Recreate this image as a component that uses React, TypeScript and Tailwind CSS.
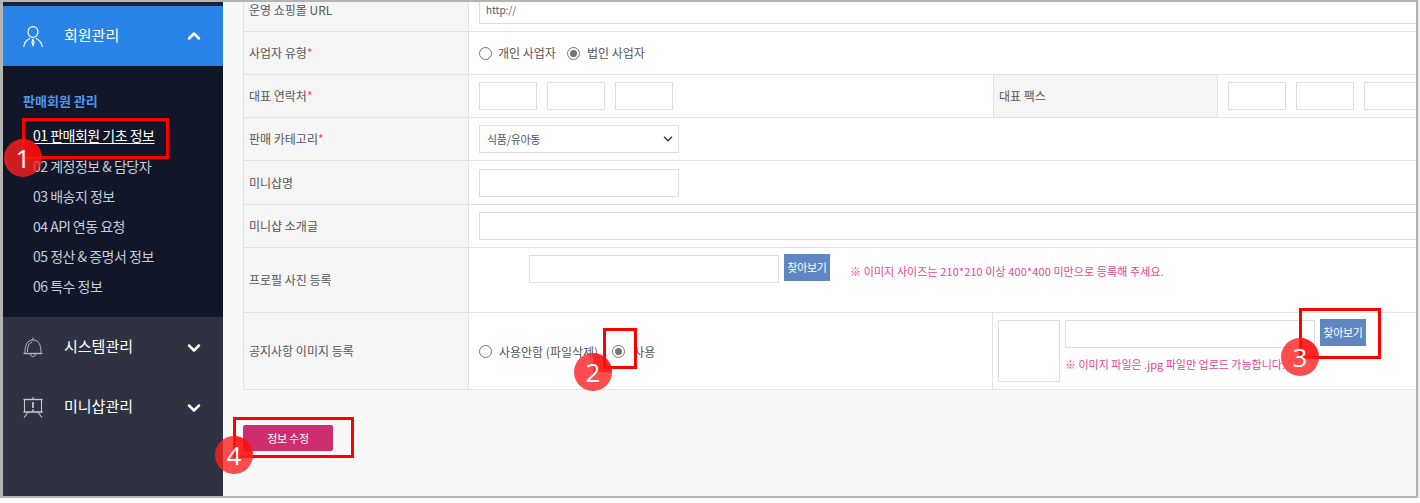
import { ChevronDown, ChevronUp } from "lucide-react"

const subMenus = ["02 계정정보 & 담당자", "03 배송지 정보", "04 API 연동 요청", "05 정산 & 증명서 정보", "06 특수 정보"]

function UserIcon() {
  return (
    <svg width="20" height="21" viewBox="0 0 20 21" fill="none" stroke="#fff" strokeWidth="1.2" className="shrink-0">
      <ellipse cx="10" cy="6" rx="5" ry="5.4" />
      <path d="M0.8 21 C1 16 4 14 7 12.3 M19.2 21 C19 16 16 14 13 12.3 M10 13.5 l-1 2.5 1 4 1-4z" />
    </svg>
  )
}

function BellIcon() {
  return (
    <svg width="20" height="21" viewBox="0 0 20 21" fill="none" stroke="#b4b6bf" strokeWidth="1" className="shrink-0">
      <path d="M10 0.5v2.5M2 16 C2 8 4 3 10 3 C16 3 18 8 18 16" />
      <path d="M4.5 15 C4.5 9 6 6 9 5" />
      <path d="M0.5 16.5h19" strokeWidth="1.4" />
      <path d="M7.5 17c0 3.6 5 3.6 5 0" />
    </svg>
  )
}

function BoardIcon() {
  return (
    <svg width="20" height="21" viewBox="0 0 20 21" fill="none" stroke="#c3c5cc" strokeWidth="1.1" className="shrink-0">
      <path d="M0.5 2.5h19" strokeWidth="1.4" />
      <path d="M1.5 2.5v12.5M18.5 2.5v12.5M10 0v2" />
      <path d="M0.5 15h19" strokeWidth="1.6" />
      <path d="M5 15.5l-4 5M15 15.5l4 5" />
      <path d="M10 5v6M10 12.5v1.8" strokeWidth="1.8" />
    </svg>
  )
}

function Radio({ checked }: { checked?: boolean }) {
  return (
    <span className="flex h-[13px] w-[13px] shrink-0 items-center justify-center rounded-full border border-[#767676] bg-white">
      {checked && <span className="h-[7px] w-[7px] rounded-full bg-[#757575]" />}
    </span>
  )
}

function Field({ className }: { className: string }) {
  return <div className={`border border-[#dedede] bg-white ${className}`} />
}

function Label({ text, star, className = "items-center" }: { text: string; star?: boolean; className?: string }) {
  return (
    <div className={`flex w-[225px] shrink-0 border-r border-[#e2e2e2] bg-[#f5f5f5] pl-[5px] ${className}`}>
      {text}
      {star && <span className="text-[#e8458c]">*</span>}
    </div>
  )
}

function Browse({ className }: { className: string }) {
  return (
    <div className={`flex h-[27px] w-[46px] shrink-0 items-center justify-center bg-[#5f86c1] text-[11px] tracking-[-0.3px] text-white ${className}`}>
      찾아보기
    </div>
  )
}

function RedBox({ className }: { className: string }) {
  return <div className={`absolute border-[3px] border-[#ff0000] ${className}`} />
}

function Badge({ n, className }: { n: number; className: string }) {
  return (
    <div
      className={`absolute flex h-[38px] w-[38px] items-center justify-center overflow-hidden rounded-full bg-[#ff2020]/80 font-['Open_Sans',sans-serif] text-[26px] text-white ${className}`}
    >
      <span className="absolute top-0 right-0 h-[19px] w-[19px] bg-[#ff0000]/50" />
      <span className="relative">{n}</span>
    </div>
  )
}

export default function App() {
  return (
    <div className="relative h-[503px] w-[1420px] overflow-hidden bg-white font-['Noto_Sans_CJK_KR','Noto_Sans',sans-serif] text-[12px] text-[#555]">
      <div className="h-[498px] bg-[#e9e9e9]">
        <div className="h-[498px] w-[1418px] border-t-2 border-r-2 border-b-2 border-l-[3px] border-[#b4b4b4]">
          <div className="flex h-full">
            {/* left menu */}
            <aside className="flex w-[220px] shrink-0 flex-col bg-[#2f3241] text-white">
              <div className="h-1 bg-[#1e2233]" />
              <div className="flex h-[60px] items-center bg-[#2a84e8] pr-[19px] pl-[20px]">
                <UserIcon />
                <span className="mb-[1px] ml-[21px] flex-1 text-[15px]">회원관리</span>
                <ChevronUp size={20} strokeWidth={3} />
              </div>
              <div className="h-[251px] bg-[#111729] pt-[25px]">
                <div className="pl-[20px] text-[13px] font-bold text-[#4f96ee]">판매회원 관리</div>
                <div className="mt-[9px] h-[31px] pl-[30px] text-[14px] leading-[30px] tracking-[-0.5px] text-white">
                  <span className="underline underline-offset-2">01 판매회원 기초 정보</span>
                </div>
                {subMenus.map((menu) => (
                  <div key={menu} className="pl-[30px] text-[14px] leading-[30px] tracking-[-0.5px] text-[#c5cddd]">
                    {menu}
                  </div>
                ))}
              </div>
              <div className="flex h-[60px] items-center pr-[19px] pl-[20px]">
                <BellIcon />
                <span className="mb-[1px] ml-[21px] flex-1 text-[15px]">시스템관리</span>
                <ChevronDown size={20} strokeWidth={3} className="mt-[2px]" />
              </div>
              <div className="flex h-[60px] items-center pr-[19px] pl-[20px]">
                <BoardIcon />
                <span className="mb-[1px] ml-[21px] flex-1 text-[15px]">미니샵관리</span>
                <ChevronDown size={20} strokeWidth={3} className="mt-[2px]" />
              </div>
            </aside>

            {/* form area */}
            <main className="min-w-0 flex-1 overflow-hidden bg-[#f8f8f8] pl-[20px]">
              <div className="border-l border-[#e2e2e2] bg-white">
                <div className="flex h-[30px] border-b border-[#e2e2e2]">
                  <Label text="운영 쇼핑몰 URL" className="items-start leading-[16px]" />
                  <div className="flex-1 pl-[10px]">
                    <div className="flex h-[22px] items-center border border-t-0 border-r-0 border-[#dedede] pb-[6px] pl-[6px] text-[10px]">http://</div>
                  </div>
                </div>
                <div className="flex h-[43px] border-b border-[#e2e2e2]">
                  <Label text="사업자 유형" star />
                  <div className="flex flex-1 items-center pl-[10px]">
                    <Radio />
                    <span className="ml-[6px]">개인 사업자</span>
                    <span className="ml-[11px]">
                      <Radio checked />
                    </span>
                    <span className="ml-[7px]">법인 사업자</span>
                  </div>
                </div>
                <div className="flex h-[43px] border-b border-[#e2e2e2]">
                  <Label text="대표 연락처" star />
                  <div className="flex w-[524px] shrink-0 items-center gap-[10px] pl-[10px]">
                    <Field className="h-[28px] w-[58px]" />
                    <Field className="h-[28px] w-[58px]" />
                    <Field className="h-[28px] w-[58px]" />
                  </div>
                  <div className="flex w-[225px] shrink-0 items-center border-x border-[#e2e2e2] bg-[#f5f5f5] pl-[5px]">대표 팩스</div>
                  <div className="flex flex-1 items-center gap-[10px] overflow-hidden pl-[10px]">
                    <Field className="h-[28px] w-[58px] shrink-0" />
                    <Field className="h-[28px] w-[58px] shrink-0" />
                    <Field className="h-[28px] w-[58px] shrink-0" />
                  </div>
                </div>
                <div className="flex h-[43px] border-b border-[#e2e2e2]">
                  <Label text="판매 카테고리" star />
                  <div className="flex flex-1 items-center pl-[10px]">
                    <div className="flex h-[28px] w-[200px] items-center justify-between border border-[#dedede] pr-[3px] pl-[7px] text-[11px] tracking-[-0.3px]">
                      식품/유아동
                      <ChevronDown size={14} strokeWidth={3} className="text-[#444]" />
                    </div>
                  </div>
                </div>
                <div className="flex h-[44px] border-b border-[#e2e2e2]">
                  <Label text="미니샵명" />
                  <div className="flex flex-1 items-center pl-[10px]">
                    <Field className="h-[28px] w-[200px]" />
                  </div>
                </div>
                <div className="flex h-[43px] border-b border-[#e2e2e2]">
                  <Label text="미니샵 소개글" />
                  <div className="flex flex-1 items-center pl-[10px]">
                    <Field className="h-[28px] flex-1 border-r-0" />
                  </div>
                </div>
                <div className="flex h-[65px] border-b border-[#e2e2e2]">
                  <Label text="프로필 사진 등록" />
                  <div className="flex flex-1 items-start pt-[7px] pl-[60px]">
                    <Field className="h-[28px] w-[250px]" />
                    <Browse className="ml-[5px] -mt-px" />
                    <span className="mt-[8px] ml-[20px] text-[11px] tracking-[0.1px] text-[#e8458c]">※ 이미지 사이즈는 210*210 이상 400*400 미만으로 등록해 주세요.</span>
                  </div>
                </div>
                <div className="flex h-[77px] border-b border-[#e2e2e2]">
                  <Label text="공지사항 이미지 등록" className="items-center" />
                  <div className="flex w-[524px] shrink-0 items-center border-r border-[#e2e2e2] pt-[1px] pl-[10px]">
                    <Radio />
                    <span className="ml-[7px]">사용안함 (파일삭제)</span>
                    <span className="ml-[14px]">
                      <Radio checked />
                    </span>
                    <span className="ml-[8px]">사용</span>
                  </div>
                  <div className="flex flex-1 pt-[7px] pl-[5px]">
                    <Field className="h-[62px] w-[62px] shrink-0" />
                    <div className="ml-[5px]">
                      <div className="flex">
                        <Field className="h-[28px] w-[250px]" />
                        <Browse className="ml-[5px] -mt-px" />
                      </div>
                      <div className="mt-[8px] text-[11px] text-[#e8458c]">※ 이미지 파일은 .jpg 파일만 업로드 가능합니다.</div>
                    </div>
                  </div>
                </div>
              </div>
              <div className="mt-[35px] flex h-[26px] w-[90px] items-center justify-center rounded-[2px] bg-[#cc2e6e] text-[11px] tracking-[-0.3px] text-white">정보 수정</div>
            </main>
          </div>
        </div>
      </div>

      {/* callouts drawn over the capture */}
      <RedBox className="top-[118px] left-[22px] h-[41px] w-[147px]" />
      <RedBox className="top-[328px] left-[603px] h-[41px] w-[34px]" />
      <RedBox className="top-[308px] left-[1299px] h-[51px] w-[82px]" />
      <RedBox className="top-[417px] left-[233px] h-[41px] w-[121px]" />
      <Badge n={1} className="top-[139px] left-[4px]" />
      <Badge n={2} className="top-[353px] left-[574px]" />
      <Badge n={3} className="top-[338px] left-[1281px]" />
      <Badge n={4} className="top-[436px] left-[215px]" />
    </div>
  )
}
